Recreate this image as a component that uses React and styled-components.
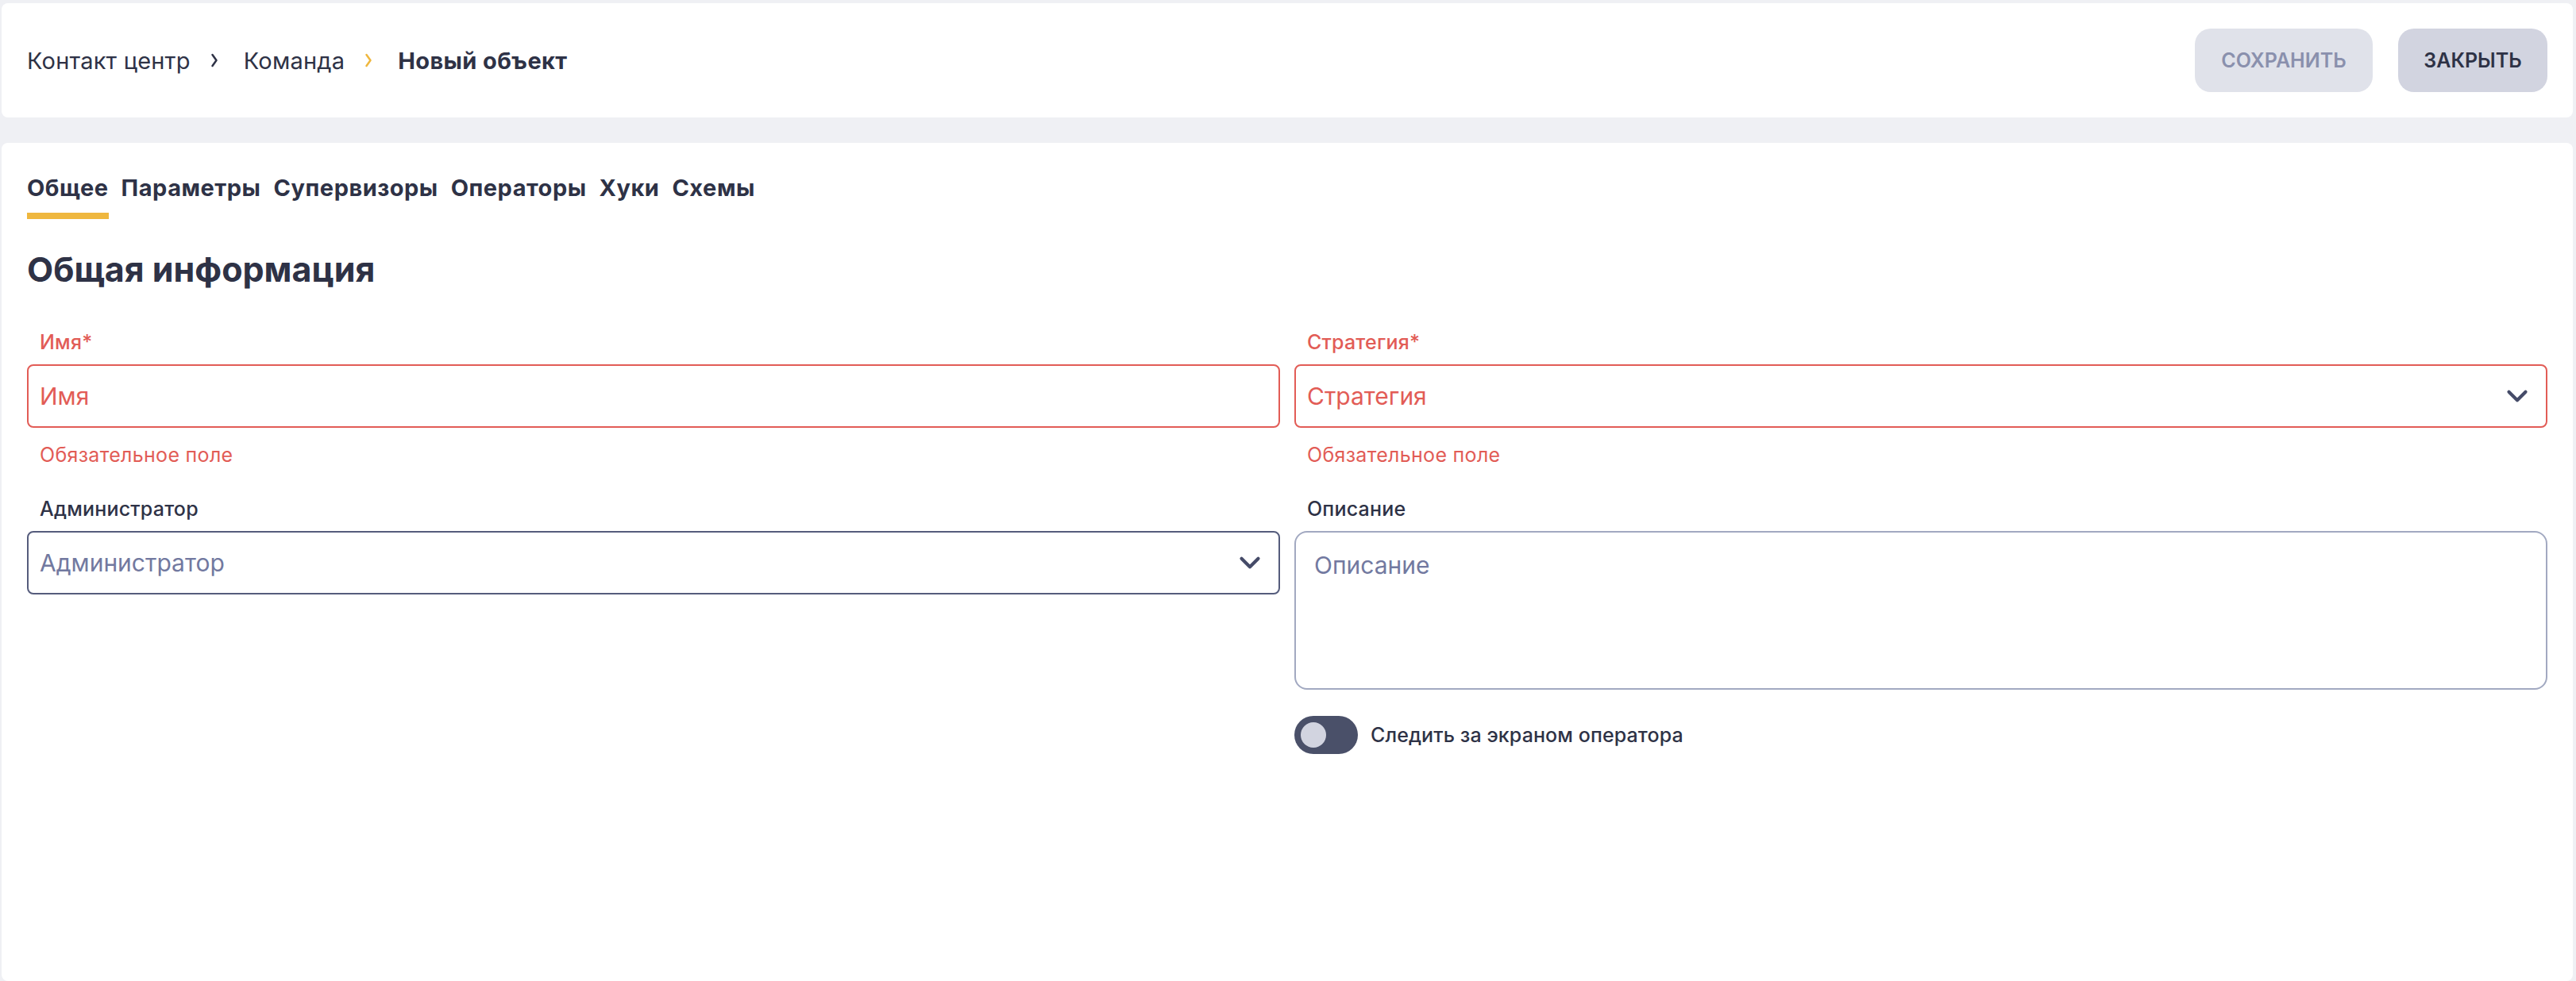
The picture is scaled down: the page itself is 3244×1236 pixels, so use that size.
import React from 'react'
import styled, { createGlobalStyle } from 'styled-components'
import { ChevronDown } from 'lucide-react'

const Global = createGlobalStyle`
  html, body {
    margin: 0;
    background: #eff0f4;
    font-family: "Inter", "Noto Sans", sans-serif;
    color: #2e3246;
  }
  * { box-sizing: border-box; }
`

const Page = styled.div`
  height: 1236px;
  overflow: hidden;
  padding: 4px 4px 0 2px;
  display: flex;
  flex-direction: column;
  gap: 32px;
`

const TopBar = styled.header`
  height: 144px;
  flex: none;
  background: #fff;
  border-radius: 8px;
  padding: 32px;
  display: flex;
  align-items: center;
  justify-content: space-between;
`

const Crumbs = styled.nav`
  display: flex;
  align-items: center;
  font-size: 29px;
`

const Crumb = styled.span`
  font-weight: ${p => (p.$current ? 700 : 400)};
  letter-spacing: ${p => (p.$current ? '0.4px' : '0.2px')};
`

const CrumbArrowIcon = styled.svg`
  width: 10px;
  height: 18px;
  margin: 0 32px 0 25px;
  fill: none;
  stroke: ${p => (p.$accent ? '#efb73e' : '#2e3246')};
  stroke-width: 2.5;
  stroke-linecap: round;
  stroke-linejoin: round;
`

const Actions = styled.div`
  display: flex;
  gap: 32px;
`

const Button = styled.button`
  height: 80px;
  width: ${p => p.$width}px;
  border: 0;
  border-radius: 20px;
  background: ${p => (p.disabled ? '#e0e2ea' : '#d2d4e0')};
  color: ${p => (p.disabled ? '#8a90ad' : '#2e3246')};
  font: 600 25px "Inter", sans-serif;
  text-transform: uppercase;
`

const Card = styled.main`
  flex: 1;
  background: #fff;
  border-radius: 8px;
  padding: 0 32px;
`

const Tabs = styled.div`
  display: flex;
  gap: 16px;
  height: 96px;
  padding-top: 36px;
`

const Tab = styled.div`
  height: 60px;
  font-size: 29px;
  font-weight: 700;
  line-height: 42px;
  letter-spacing: 0.5px;
  border-bottom: ${p => (p.$active ? '8px solid #efb73e' : '0')};
`

const Heading = styled.h2`
  margin: 0;
  padding-top: 37px;
  font-size: 43px;
  line-height: 52px;
  font-weight: 700;
`

const Form = styled.div`
  display: grid;
  grid-template-columns: 1fr 1fr;
  column-gap: 18px;
  margin-top: 48px;
`

const Column = styled.div`
  display: flex;
  flex-direction: column;
`

const Label = styled.label`
  display: block;
  height: 46px;
  padding-left: 16px;
  font-size: 25px;
  line-height: 36px;
  font-weight: 500;
  letter-spacing: 0.2px;
  color: ${p => (p.$error ? '#e25c56' : '#2e3246')};
`

const Control = styled.div`
  height: 80px;
  display: flex;
  align-items: center;
  justify-content: space-between;
  padding: 0 15px 0 14px;
  border: 2px solid ${p => (p.$error ? '#e25c56' : '#555c7c')};
  border-radius: 8px;
`

const Input = styled.input`
  flex: 1;
  min-width: 0;
  border: 0;
  outline: 0;
  padding: 0;
  background: none;
  font: 400 30px "Inter", sans-serif;
  &::placeholder {
    color: ${p => (p.$error ? '#e25c56' : '#7279a0')};
    opacity: 1;
  }
`

const Arrow = styled(ChevronDown)`
  width: 42px;
  height: 42px;
  flex: none;
  color: #454b68;
`

const ErrorText = styled.div`
  height: 84px;
  padding: 16px 0 0 16px;
  font-size: 25px;
  line-height: 36px;
  letter-spacing: 0.3px;
  color: #e25c56;
`

const TextArea = styled.textarea`
  display: block;
  width: 100%;
  height: 200px;
  padding: 23px;
  border: 2px solid #a2a9c1;
  border-radius: 16px;
  outline: 0;
  resize: none;
  font: 400 30px "Inter", sans-serif;
  &::placeholder {
    color: #7279a0;
    opacity: 1;
  }
`

const SwitchRow = styled.div`
  display: flex;
  align-items: center;
  gap: 16px;
  margin-top: 33px;
  font-size: 25px;
  font-weight: 500;
  letter-spacing: 0.1px;
`

const Switch = styled.div`
  width: 80px;
  height: 48px;
  padding: 8px;
  border-radius: 24px;
  background: #4a5069;
`

const Knob = styled.div`
  width: 32px;
  height: 32px;
  border-radius: 50%;
  background: #d2d4e0;
`

function CrumbArrow({ accent }) {
  return (
    <CrumbArrowIcon $accent={accent} viewBox="0 0 10 18">
      <path d="M2.5 2 L7.5 9 L2.5 16" />
    </CrumbArrowIcon>
  )
}

function Field({ label, error, select, placeholder }) {
  return (
    <div>
      <Label $error={error}>{label}</Label>
      <Control $error={error}>
        <Input $error={error} placeholder={placeholder} />
        {select && <Arrow strokeWidth={2.4} />}
      </Control>
      {error && <ErrorText>Обязательное поле</ErrorText>}
    </div>
  )
}

export default function App() {
  return (
    <Page>
      <Global />
      <TopBar>
        <Crumbs>
          <Crumb>Контакт центр</Crumb>
          <CrumbArrow />
          <Crumb>Команда</Crumb>
          <CrumbArrow accent />
          <Crumb $current>Новый объект</Crumb>
        </Crumbs>
        <Actions>
          <Button disabled $width={224}>Сохранить</Button>
          <Button $width={188}>Закрыть</Button>
        </Actions>
      </TopBar>
      <Card>
        <Tabs>
          <Tab $active>Общее</Tab>
          <Tab>Параметры</Tab>
          <Tab>Супервизоры</Tab>
          <Tab>Операторы</Tab>
          <Tab>Хуки</Tab>
          <Tab>Схемы</Tab>
        </Tabs>
        <Heading>Общая информация</Heading>
        <Form>
          <Column>
            <Field label="Имя*" placeholder="Имя" error />
            <Field label="Администратор" placeholder="Администратор" select />
          </Column>
          <Column>
            <Field label="Стратегия*" placeholder="Стратегия" select error />
            <div>
              <Label>Описание</Label>
              <TextArea placeholder="Описание" />
            </div>
            <SwitchRow>
              <Switch><Knob /></Switch>
              Следить за экраном оператора
            </SwitchRow>
          </Column>
        </Form>
      </Card>
    </Page>
  )
}
